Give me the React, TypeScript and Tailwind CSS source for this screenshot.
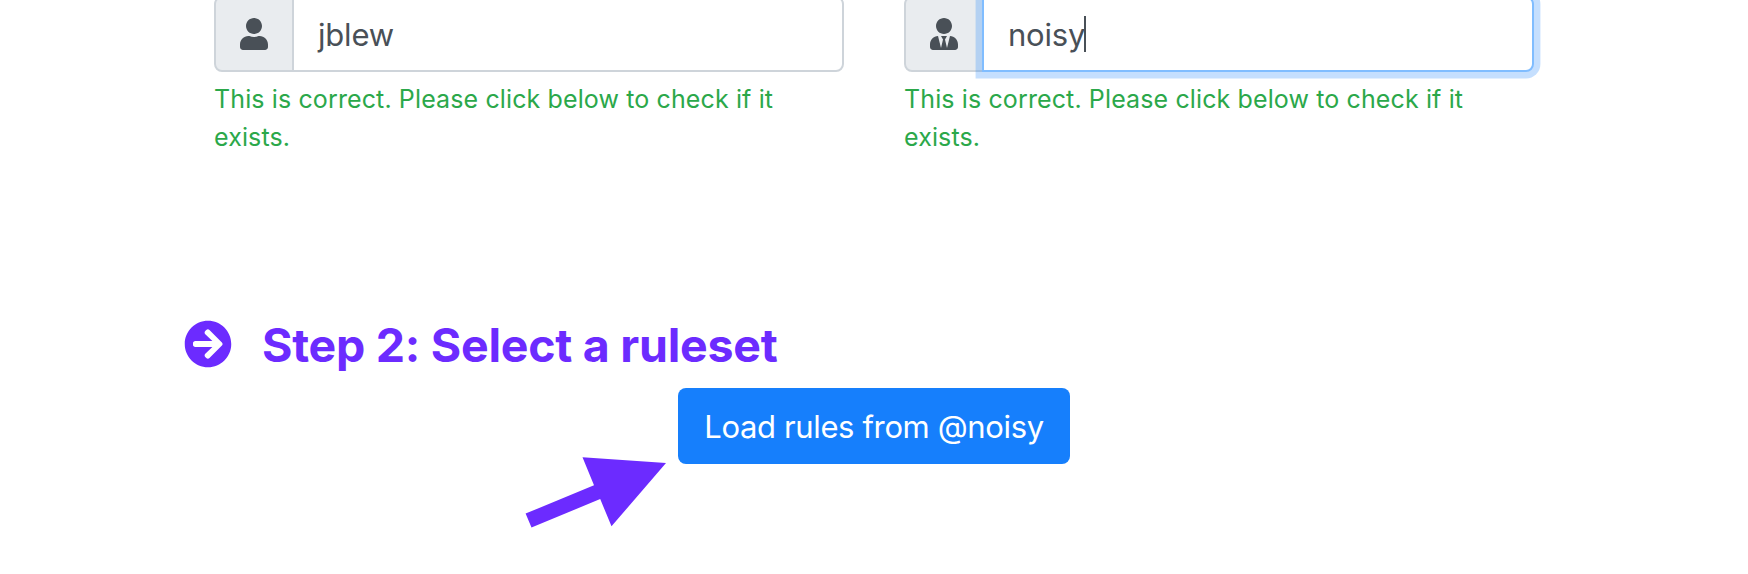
import { FaArrowCircleRight, FaUser, FaUserTie } from "react-icons/fa";
import type { IconType } from "react-icons";

const HINT = "This is correct. Please click below to check if it exists.";

function Field({ icon: Icon, value, focused = false }: { icon: IconType; value: string; focused?: boolean }) {
  return (
    <div className="w-[630px]">
      <div className="flex h-[76px]">
        <div className="flex w-[80px] items-center justify-center rounded-l-lg border-2 border-[#ced4da] bg-[#e9ecef] text-[#495057]">
          <Icon className="size-8" />
        </div>
        <div
          className={
            focused
              ? "relative -ml-0.5 flex flex-1 items-center rounded-r-lg border-2 border-[#80bdff] bg-white pl-6 shadow-[0_0_0_6.4px_rgba(22,127,252,0.25)]"
              : "relative -ml-0.5 flex flex-1 items-center rounded-r-lg border-2 border-[#ced4da] bg-white pl-6"
          }
        >
          <span className="pt-0.5 text-[31px] leading-[48px] tracking-[-0.2px] text-[#495057]">{value}</span>
          {focused && <span className="-ml-px h-9 w-0.5 bg-[#495057]" />}
        </div>
      </div>
      <p className="mt-2 w-[600px] text-[25px] leading-[38.4px] tracking-[0.12px] text-[#2ba84a]">{HINT}</p>
    </div>
  );
}

export default function App() {
  return (
    <main className="h-[574px] w-[1748px] overflow-hidden bg-white font-['Inter','Liberation_Sans',sans-serif]">
      <div className="-mt-1 flex gap-[60px] pl-[214px]">
        <Field icon={FaUser} value="jblew" />
        <Field icon={FaUserTie} value="noisy" focused />
      </div>
      <h2 className="mb-1.5 mt-[149px] flex h-[76px] items-center pl-[184px] text-[46.5px] font-bold tracking-[-0.26px] text-[#6c2bff]">
        <FaArrowCircleRight className="size-12" />
        <span className="ml-[30px] pt-0.5 leading-[58px]">Step 2: Select a ruleset</span>
      </h2>
      <div className="relative flex justify-center">
        <button className="flex h-[76px] w-[392px] items-center justify-center rounded-lg bg-[#167ffc] pt-0.5 text-[31px] leading-[48px] tracking-[-0.36px] text-white">
          Load rules from @noisy
        </button>
        <svg className="absolute left-[520px] top-[62px] h-[84px] w-[150px]" viewBox="520 450 150 84" fill="#6c2bff">
          <path d="M582.5 457.2 666 463 611.5 526.3 600.2 499 531.5 527.6 525.6 513.6 594 485.3Z" />
        </svg>
      </div>
    </main>
  );
}
